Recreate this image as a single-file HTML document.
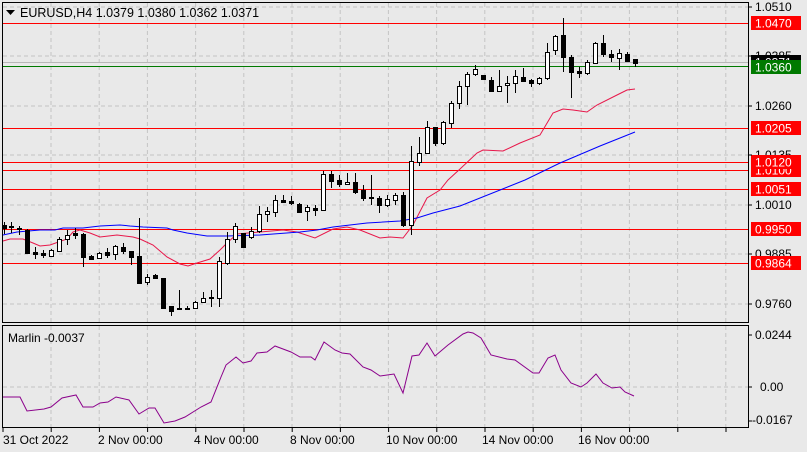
<!DOCTYPE html><html><head><style>
body{margin:0;width:807px;height:452px;background:#e9e9e9;overflow:hidden;font-family:"Liberation Sans",sans-serif;}
svg{position:absolute;left:0;top:0}
</style></head><body>
<svg id="s" width="807" height="452" xmlns="http://www.w3.org/2000/svg" font-family="Liberation Sans, sans-serif" font-size="12">
<g id="grid" stroke="#c4c4c4" stroke-dasharray="4,3" stroke-width="1"></g>
<g id="hl"></g>
<g id="ma"></g>
<g id="c"></g>
<rect x="2.5" y="2.5" width="746" height="320" fill="none" stroke="#000"/>
<rect x="2.5" y="325.5" width="746" height="102" fill="none" stroke="#000"/>
<path d="M6 10 L15 10 L10.5 15 Z" fill="#000"/>
<text x="20" y="17" font-size="12.5">EURUSD,H4  1.0379 1.0380 1.0362 1.0371</text>
<text x="8" y="342" font-size="12">Marlin -0.0037</text>
<g id="ax" font-size="12"></g>
</svg>
<script>
const NS="http://www.w3.org/2000/svg";
function el(p,t,a,txt){const e=document.createElementNS(NS,t);for(const k in a)e.setAttribute(k,a[k]);if(txt!=null)e.textContent=txt;document.getElementById(p).appendChild(e);return e;}
for(let x=51;x<748;x+=48.2){el('grid','line',{x1:x,y1:3,x2:x,y2:322});el('grid','line',{x1:x,y1:326,x2:x,y2:427});}
[7,56,106,155,205,254,304].forEach(y=>el('grid','line',{x1:3,y1:y,x2:748,y2:y}));
el('grid','line',{x1:3,y1:387,x2:748,y2:387});
[23,128,162,170,189,229,263].forEach(y=>el('hl','line',{x1:3,y1:y+.5,x2:748,y2:y+.5,stroke:'#ff0000'}));
el('hl','line',{x1:3,y1:62.5,x2:748,y2:62.5,stroke:'#b8b8b8'});
el('hl','line',{x1:3,y1:66.5,x2:748,y2:66.5,stroke:'#007a00'});
const red=[[0,241],[10,239],[23,239],[33,243],[40,246],[50,245],[67,239],[73,232],[80,230],[90,233],[100,237],[117,235],[133,237],[140,239],[153,245],[167,257],[180,264],[188,266],[197,263],[210,259],[220,250],[227,243],[237,234],[260,232],[283,230],[297,232],[315,238],[333,229],[347,227],[360,230],[380,238],[390,237],[403,238],[413,225],[427,198],[440,190],[448,180],[460,169],[477,153],[483,150],[503,151],[520,143],[540,135],[553,113],[563,109],[573,110],[587,112],[597,105],[617,95],[627,90],[635,89]];
const blue=[[3,235],[17,232],[40,230],[55,230],[63,228],[83,228],[100,226],[120,225],[130,226],[143,227],[167,228],[173,230],[187,233],[207,236],[227,236],[260,235],[300,232],[317,230],[333,227],[367,223],[400,221],[417,218],[433,213],[460,206],[525,180],[560,163],[600,146],[635,132]];
const mar=[[3,397],[20,397],[27,411],[44,409],[51,407],[62,398],[76,395],[83,407],[93,407],[100,403],[108,402],[116,397],[129,400],[139,414],[149,408],[155,408],[164,423],[175,421],[185,417],[201,407],[211,402],[221,377],[226,365],[236,357],[243,363],[251,361],[257,353],[267,352],[275,346],[291,352],[300,357],[311,357],[315,360],[324,342],[335,350],[342,353],[350,354],[363,367],[371,370],[380,376],[394,374],[403,393],[412,356],[419,355],[427,343],[435,356],[448,345],[463,334],[468,332],[473,333],[481,338],[491,355],[507,359],[515,360],[533,373],[539,373],[548,358],[555,355],[561,370],[571,383],[581,387],[587,383],[596,374],[603,383],[612,388],[620,387],[625,392],[634,396]];
const pl=a=>a.map(p=>p.join(',')).join(' ');
el('ma','polyline',{points:pl(red.map(p=>[Math.max(p[0],3),p[1]])),fill:'none',stroke:'#e8174a'});
el('ma','polyline',{points:pl(blue),fill:'none',stroke:'#0000ff'});
el('ma','polyline',{points:pl(mar),fill:'none',stroke:'#8b008b'});
const C=[[4,225,228,222,234,0],[11,226,227,222,233,1],[19,228,229,226,235,1],[27,230,253,229,254,0],[35,252,254,247,259,0],[43,253,255,250,258,0],[51,250,256,249,257,1],[59,239,251,237,252,1],[67,235,239,230,245,1],[75,233,235,228,239,0],[83,234,257,233,267,0],[91,256,259,255,260,0],[99,253,258,252,259,1],[107,252,255,248,258,0],[115,246,254,245,260,1],[123,247,251,243,254,0],[131,251,257,251,265,0],[139,256,283,218,284,0],[147,277,282,274,285,1],[155,275,278,274,279,0],[163,278,308,278,309,0],[171,306,311,306,316,0],[179,308,309,290,310,1],[187,308,309,306,310,0],[195,302,308,301,309,1],[203,298,302,292,303,1],[211,297,298,290,307,1],[219,261,298,257,307,1],[227,239,263,232,265,1],[235,226,239,223,243,1],[243,233,247,233,248,0],[251,231,237,227,239,1],[259,214,231,206,233,1],[267,211,214,207,222,1],[275,200,212,195,217,1],[283,200,202,195,203,0],[291,201,203,196,205,0],[299,204,212,203,213,0],[307,207,211,205,221,1],[315,208,210,205,216,0],[323,174,210,171,211,1],[331,174,181,171,188,0],[339,180,184,175,187,0],[347,182,184,173,185,1],[355,182,192,173,194,0],[363,190,198,185,201,0],[371,197,198,175,205,0],[379,198,205,196,213,0],[387,199,205,195,207,1],[395,195,200,193,205,1],[403,195,225,192,227,0],[411,161,225,146,235,1],[419,153,162,137,166,1],[427,127,153,121,154,1],[435,127,143,127,146,0],[443,122,143,121,145,1],[451,103,123,101,128,1],[459,86,103,81,109,1],[467,74,86,72,105,1],[475,69,74,65,76,1],[483,75,79,75,80,0],[491,80,91,77,92,0],[499,86,91,70,91,1],[507,83,85,76,103,1],[515,76,83,70,93,1],[523,77,81,68,82,0],[531,80,83,79,87,0],[539,78,83,77,85,1],[547,52,78,43,80,1],[555,36,50,35,55,1],[563,35,57,18,72,0],[571,57,72,55,98,0],[579,71,73,67,78,0],[587,62,73,60,75,1],[595,43,63,42,64,1],[603,43,54,35,57,0],[611,54,57,50,62,0],[619,53,58,49,70,1],[627,54,61,52,62,0],[635,59,63,59,67,0]];
C.forEach(k=>{const[x,t,b,h,l,w]=k;el('c','line',{x1:x+.5,y1:h,x2:x+.5,y2:l,stroke:'#000'});el('c','rect',{x:x-1.5,y:t+.5,width:4,height:Math.max(b-t,1),fill:w?'#fff':'#000',stroke:'#000'});});
[[1.0510,7],[1.0260,106],[1.0010,205],[0.9760,304]].forEach(a=>el('ax','text',{x:755,y:a[1]+4},a[0].toFixed(4)));
el('ax','text',{x:755,y:60},'1.0385');el('ax','text',{x:755,y:159},'1.0135');el('ax','text',{x:755,y:258},'0.9885');
function box(y,txt,bg){el('ax','rect',{x:751,y:y-7,width:50,height:14,fill:bg});el('ax','text',{x:755,y:y+4.5,fill:'#fff'},txt);}
box(62,'1.0371','#000');
box(170,'1.0100','#ff0000');
[[23,'1.0470'],[128,'1.0205'],[162,'1.0120'],[189,'1.0051'],[229,'0.9950'],[263,'0.9864']].forEach(a=>box(a[0],a[1],'#ff0000'));
box(67,'1.0360','#007a00');
el('ax','text',{x:755,y:339},'0.0244');el('ax','text',{x:760,y:391},'0.00');el('ax','text',{x:752,y:424},'-0.0167');
[[3,'31 Oct 2022'],[98,'2 Nov 00:00'],[194,'4 Nov 00:00'],[290,'8 Nov 00:00'],[386,'10 Nov 00:00'],[482,'14 Nov 00:00'],[578,'16 Nov 00:00']].forEach(a=>el('ax','text',{x:a[0],y:444},a[1]));
for(let x=3;x<748;x+=48.2){el('ax','line',{x1:x,y1:428,x2:x,y2:432,stroke:'#000'});}
for(const y of [7,56,106,155,205,254,304,335,387,421])el('ax','line',{x1:749,y1:y,x2:752,y2:y,stroke:'#000'});
</script>
</body></html>
